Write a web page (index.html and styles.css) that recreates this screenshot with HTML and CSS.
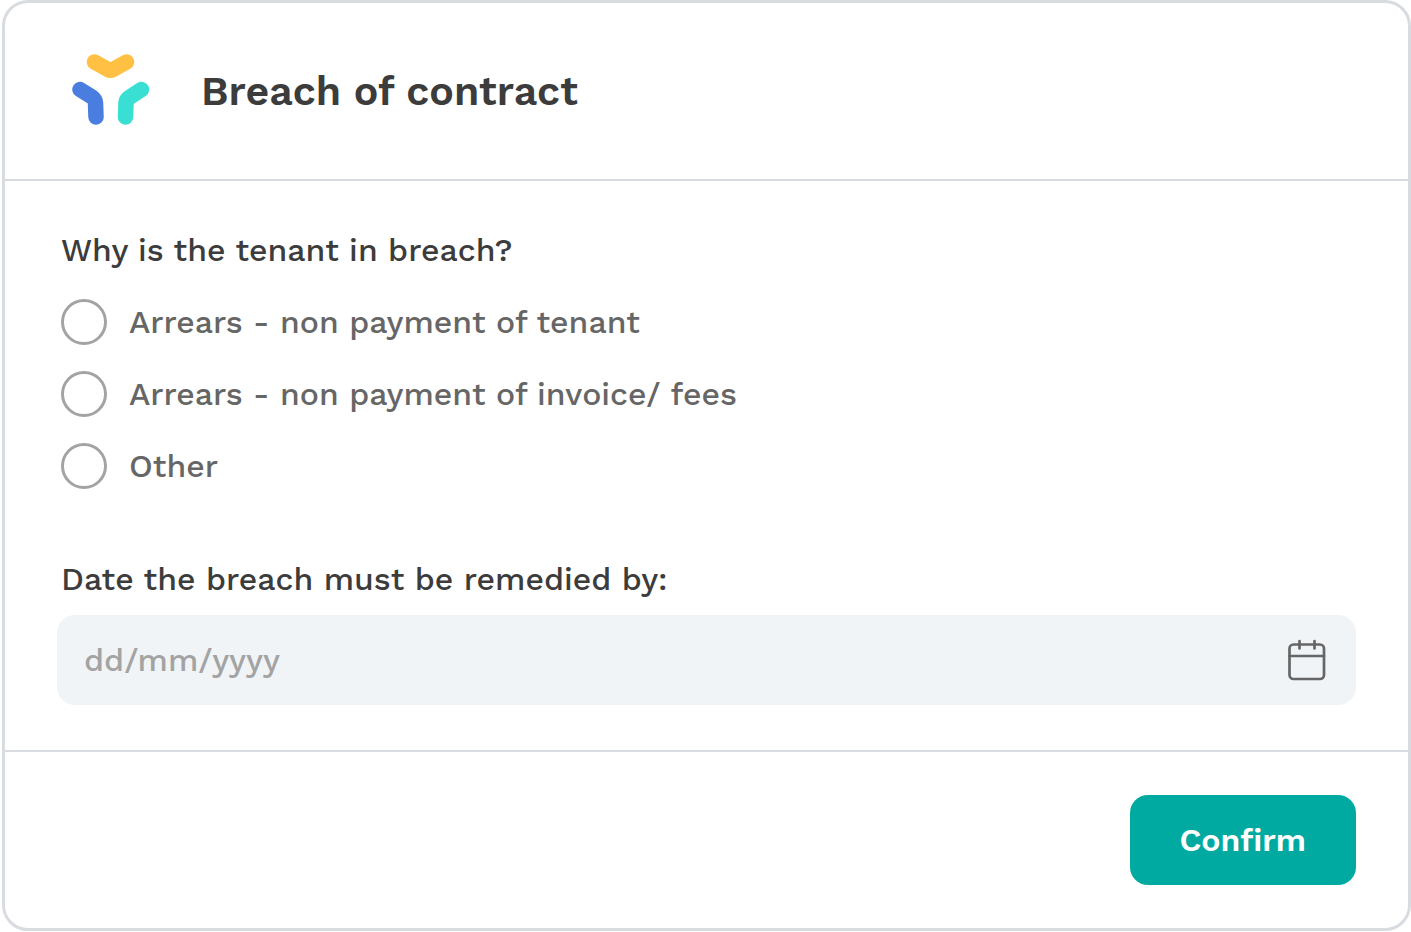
FILE: index.html
```html
<!DOCTYPE html>
<html lang="en">
<head>
<meta charset="utf-8">
<title>Breach of contract</title>
<link rel="stylesheet" href="styles.css">
</head>
<body>
<form class="card">
  <header class="card-header">
    <svg class="logo" viewBox="0 0 78 72" fill="none" stroke-width="15.500" stroke-linecap="round" stroke-linejoin="round" aria-hidden="true">
      <path stroke="#ffc043" d="M22.500 8 L36 15.500 Q38.500 16.800 41 15.500 L54.500 8"/>
      <path stroke="#4a7de0" d="M8 35.500 L20 43 Q23.500 45.500 23.500 49 L24 63"/>
      <path stroke="#38dfd2" d="M69.500 35.500 L58 43 Q54 45.500 54 49 L53.500 63"/>
    </svg>
    <h1 class="title">Breach of contract</h1>
  </header>
  <div class="card-body">
    <fieldset class="reasons">
      <legend class="question">Why is the tenant in breach?</legend>
      <label class="option"><input class="radio" type="radio" name="reason" value="rent"><span>Arrears - non payment of tenant</span></label>
      <label class="option"><input class="radio" type="radio" name="reason" value="fees"><span>Arrears - non payment of invoice/ fees</span></label>
      <label class="option"><input class="radio" type="radio" name="reason" value="other"><span>Other</span></label>
    </fieldset>
    <label class="question date-label" for="remedy-date">Date the breach must be remedied by:</label>
    <div class="date-field">
      <input class="date-input" id="remedy-date" type="text" placeholder="dd/mm/yyyy">
      <svg class="calendar" viewBox="0 0 38 42" fill="none" stroke="#666" stroke-width="2.700" stroke-linecap="round" aria-hidden="true">
        <rect x="1.500" y="5.500" width="34.500" height="34.500" rx="4"/>
        <path d="M1.500 17H36M11.500 2V9.500M26.500 2V9.500"/>
      </svg>
    </div>
  </div>
  <footer class="card-footer">
    <button class="confirm" type="submit">Confirm</button>
  </footer>
</form>
</body>
</html>
```
FILE: styles.css
```css
* {
  box-sizing: border-box;
}

body {
  margin: 0;
  padding-left: 2px;
  background: #fff;
  color: #3c3c3c;
  font-family: "Work Sans", Inter, "Open Sans", sans-serif;
  font-size: 32px;
  font-weight: 500;
  line-height: 40px;
}

.card {
  border: 3px solid #d8dce0;
  border-radius: 26px;
}

.card-header {
  display: flex;
  align-items: center;
  gap: 51px;
  padding: 51px 67px 53px;
  border-bottom: 2px solid #d8dce0;
}

.logo {
  width: 78px;
  height: 72px;
}

.title {
  margin: 0;
  padding-top: 2px;
  font-size: 41px;
  font-weight: 600;
  line-height: 48px;
}

.card-body {
  padding: 49px 52px 45px;
}

.reasons {
  margin: 0;
  padding: 0 4px;
  border: 0;
}

.question {
  padding: 0;
}

.option {
  display: flex;
  align-items: center;
  gap: 22px;
  margin-top: 26px;
  color: #666;
}

.question + .option {
  margin-top: 29px;
}

.radio {
  appearance: none;
  flex: none;
  width: 46px;
  height: 46px;
  margin: 0;
  border: 3px solid #a3a3a3;
  border-radius: 50%;
}

.radio:checked {
  border: 14px solid #00aaa0;
}

.date-label {
  display: block;
  margin-top: 70px;
  padding: 0 4px;
}

.date-field {
  display: flex;
  align-items: center;
  height: 90px;
  margin-top: 16px;
  padding: 0 30px 0 27px;
  border-radius: 18px;
  background: #f0f4f7;
}

.date-input {
  flex: 1;
  min-width: 0;
  padding: 0;
  border: 0;
  outline: 0;
  background: none;
  color: #3c3c3c;
  font: inherit;
}

.date-input::placeholder {
  color: #a3a3a3;
  opacity: 1;
}

.calendar {
  width: 38px;
  height: 42px;
}

.card-footer {
  display: flex;
  justify-content: flex-end;
  padding: 43px 52px;
  border-top: 2px solid #d8dce0;
}

.confirm {
  padding: 25px 50px;
  border: 0;
  border-radius: 18px;
  background: #00aaa0;
  color: #fff;
  font: inherit;
  font-weight: 600;
  cursor: pointer;
}
```
